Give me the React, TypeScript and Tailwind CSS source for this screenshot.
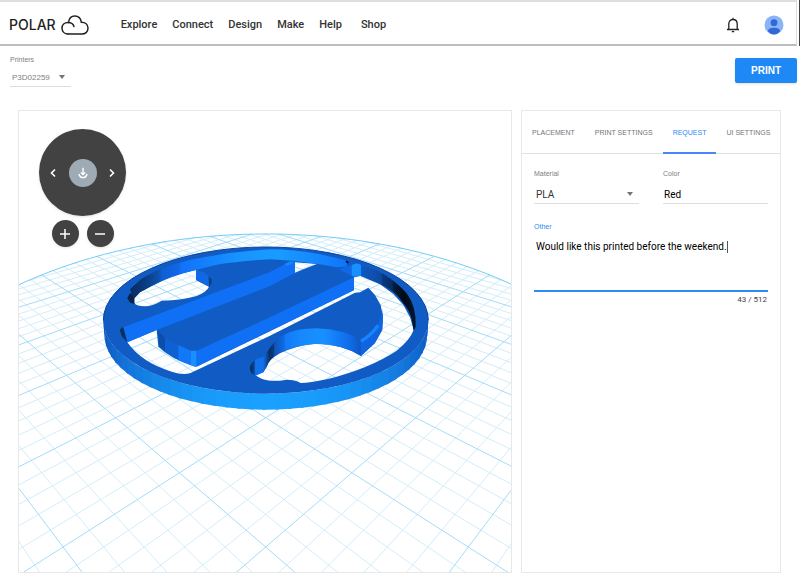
import { ReactNode, useState } from 'react';

const NAV_LINKS = ['Explore', 'Connect', 'Design', 'Make', 'Help', 'Shop'];
const TABS = ['PLACEMENT', 'PRINT SETTINGS', 'REQUEST', 'UI SETTINGS'];
const MAX_LENGTH = 512;

type Point = [number, number];

// Build plate: u/v are plate axes, one unit per major grid line
const PLATE_CENTER = 2;
const PLATE_RADIUS = 4;

const project = (u: number, v: number): Point => {
    const scale = 1 / (0.009872 + 0.00173 * (u + v));
    return [265.7 + (u - v) * scale, 49 + scale / 0.2034];
};

const toPath = (points: Point[]) =>
    points
        .map(([x, y], i) => `${i ? 'L' : 'M'}${x.toFixed(2)} ${y.toFixed(2)}`)
        .join('');

const gridPath = (major: boolean) => {
    let path = '';
    for (let k = -20; k <= 20; k++) {
        if ((k % 5 === 0) !== major) continue;
        const offset = k / 5;
        const half = Math.sqrt(PLATE_RADIUS ** 2 - offset ** 2);
        const line = PLATE_CENTER + offset;
        const from = PLATE_CENTER - half;
        const to = PLATE_CENTER + half;
        path += toPath([project(line, from), project(line, to)]);
        path += toPath([project(from, line), project(to, line)]);
    }
    return path;
};

const plateEdge = toPath(
    Array.from({ length: 181 }, (_, i) => {
        const a = (i * Math.PI) / 90;
        return project(
            PLATE_CENTER + PLATE_RADIUS * Math.cos(a),
            PLATE_CENTER + PLATE_RADIUS * Math.sin(a),
        );
    }),
);

// Outer side of the ring, split in flat facets
const FACETS = 44;
const ringFacets = Array.from({ length: FACETS }, (_, i) => {
    const a = -0.16 + (i * (Math.PI + 0.32)) / FACETS;
    const b = -0.16 + ((i + 1) * (Math.PI + 0.32)) / FACETS + 0.02;
    const top = (t: number) => `${527.5 + 487.5 * Math.cos(t)},${271 + 220 * Math.sin(t)}`;
    const low = (t: number) => `${527.5 + 484 * Math.cos(t)},${316 + 223 * Math.sin(t)}`;
    const light = Math.pow(Math.max(0, Math.sin((a + b) / 2)), 1.3);
    return {
        points: `${top(a)} ${top(b)} ${low(b)} ${low(a)}`,
        fill: `rgb(${Math.round(14 + 12 * light)},${Math.round(84 + 76 * light)},${Math.round(190 + 65 * light)})`,
    };
});

const RING =
    'M40 271A487.5 220 0 0 1 1015 271A487.5 220 0 0 1 40 271Z';
const HOLES = [
    'M133 205L150 187L185 168L225 148L265 133L318 120V150L357 170Q350 186 320 198Q280 210 215 212Q190 228 165 229Q140 229 133 220Z',
    'M112 337L200 300L205 350Q240 385 315 410L322 409L540 304L792 180L792 142L812 137L870 163L910 192L940 225L960 262L971 300Q960 330 920 362Q840 415 710 448Q660 459 632 459Q615 449 590 449Q560 454 540 452Q515 450 497 436L520 427L530 410Q535 390 570 370Q620 345 680 341Q760 343 813 378L852 340L876 300L879 262L872 225L855 195L835 173L810 187L795 188L540 317L300 430Q275 435 245 425Q155 398 112 337Z',
    'M615 97L680 102L640 118L615 128Z',
];

const PlateModel = () => {
    return (
        <svg
            viewBox="19 111 492 461"
            className="block w-full"
            role="img"
            aria-label="Model on build plate"
        >
            <defs>
                <linearGradient id="backWall" gradientUnits="userSpaceOnUse" x1="115" y1="0" x2="775" y2="0">
                    <stop offset="0" stopColor="#082a5c" />
                    <stop offset=".07" stopColor="#0a3a7c" />
                    <stop offset=".14" stopColor="#0d52ad" />
                    <stop offset=".15" stopColor="#0f5fcf" />
                    <stop offset=".23" stopColor="#1068e8" />
                    <stop offset=".24" stopColor="#1272fa" />
                    <stop offset=".38" stopColor="#1583ff" />
                    <stop offset=".5" stopColor="#1894ff" />
                    <stop offset=".68" stopColor="#189cff" />
                    <stop offset=".85" stopColor="#1588ff" />
                    <stop offset="1" stopColor="#1172f8" />
                </linearGradient>
                <linearGradient id="rightWall" gradientUnits="userSpaceOnUse" x1="812" y1="0" x2="976" y2="0">
                    <stop offset="0" stopColor="#0e59c4" />
                    <stop offset=".38" stopColor="#0d4aa0" />
                    <stop offset=".39" stopColor="#0a3a7e" />
                    <stop offset=".58" stopColor="#072c60" />
                    <stop offset=".6" stopColor="#051c3c" />
                    <stop offset=".8" stopColor="#020a16" />
                    <stop offset="1" stopColor="#03152e" />
                </linearGradient>
                <linearGradient id="holeWall" gradientUnits="userSpaceOnUse" x1="525" y1="0" x2="815" y2="0">
                    <stop offset="0" stopColor="#06264f" />
                    <stop offset=".09" stopColor="#0a3a7c" />
                    <stop offset=".1" stopColor="#0e55b8" />
                    <stop offset=".2" stopColor="#106ae8" />
                    <stop offset=".21" stopColor="#127af8" />
                    <stop offset=".38" stopColor="#1789fd" />
                    <stop offset=".6" stopColor="#1890ff" />
                    <stop offset=".75" stopColor="#147bf8" />
                    <stop offset=".88" stopColor="#106be8" />
                    <stop offset="1" stopColor="#0e56bc" />
                </linearGradient>
                <linearGradient id="nookWall" gradientUnits="userSpaceOnUse" x1="480" y1="0" x2="540" y2="0">
                    <stop offset="0" stopColor="#06264f" />
                    <stop offset=".22" stopColor="#0b469a" />
                    <stop offset=".25" stopColor="#1170ee" />
                    <stop offset=".65" stopColor="#1170ee" />
                    <stop offset="1" stopColor="#07305f" />
                </linearGradient>
            </defs>
            <g fill="none" strokeWidth="1">
                <path d={gridPath(false)} stroke="#d3edf9" />
                <path d={gridPath(true)} stroke="#a3dcfa" />
                <path d={plateEdge} stroke="#72ccf8" />
            </g>
            <g transform="translate(90 230) scale(.33333)">
                {ringFacets.map((facet) => (
                    <polygon key={facet.points} points={facet.points} fill={facet.fill} />
                ))}
                <path d={RING + HOLES.join('')} fill="#105cc4" fillRule="evenodd" />
                <path
                    d="M40 271A487.5 220 0 0 1 1015 271"
                    fill="none"
                    stroke="#0b439c"
                    strokeWidth="3"
                />
                {/* ring, inner side */}
                <path
                    fill="url(#backWall)"
                    d="M120 178L150 150Q205 112 300 90Q410 66 540 58Q610 58 690 73L775 92L768 110L740 112L690 103L610 92L540 88Q450 92 380 104L320 119Q240 138 185 168L150 187L133 205L125 192Z"
                />
                <path fill="#06244d" d="M112 205L118 192L124 190L133 205V222L120 218Z" />
                <path d="M768 93L775 99" stroke="#04152c" strokeWidth="5" />
                <path
                    fill="url(#rightWall)"
                    d="M812 105L860 120Q915 150 950 190Q980 230 977 290L971 302L966 270Q958 240 940 220Q915 180 865 160L812 138Z"
                />
                {/* upper cut-out */}
                <path fill="#1068e4" d="M318 119L345 128L357 140V170L318 150Z" />
                <path fill="#0a3f88" d="M356 139L364 148L365 160L357 171Z" />
                {/* long bar */}
                <path fill="#08305f" d="M89 300L97 291L105 298L113 337L96 320Z" />
                <path
                    fill="#1070f5"
                    d="M100 292L540 126L585 103L615 95V129L540 168L200 300L112 337Z"
                />
                <path fill="#1585ff" d="M582 103L600 94L615 95L592 108Z" />
                {/* centre bar */}
                <path fill="#0d4ea8" d="M203 300L225 325V362L209 350Z" />
                <path fill="#0f60d2" d="M225 325L265 345V389Q240 378 225 362Z" />
                <path fill="#1178f8" d="M265 345L303 362V406L265 391Z" />
                <path fill="#1890ff" d="M303 362H320V410L303 406Z" />
                <path fill="#1070f5" d="M320 362L540 262L792 142V181L540 302L320 410Z" />
                <path fill="#1068e8" d="M745 118L785 105V137Z" />
                <path
                    fill="#1890ff"
                    d="M785 106Q798 96 813 105V136Q798 144 785 137Z"
                />
                {/* lower right piece */}
                <path
                    fill="#1064e0"
                    d="M812 330Q850 306 862 285Q875 265 876 235L879 262L877 300L855 340L813 378Z"
                />
                <path
                    d="M813 334Q846 313 864 286"
                    fill="none"
                    stroke="#1684ff"
                    strokeWidth="10"
                />
                <path
                    fill="url(#holeWall)"
                    d="M530 370Q548 335 580 315Q615 296 680 295Q760 298 810 329L813 378Q760 343 680 341Q620 345 570 367Q535 388 530 410Z"
                />
                <path
                    fill="url(#nookWall)"
                    d="M480 415Q482 388 518 382L535 365L540 388L530 410L520 427L497 437L483 428Z"
                />
            </g>
        </svg>
    );
};

const Triangle = ({ className }: { className: string }) => (
    <svg viewBox="0 0 6 4" className={`pointer-events-none absolute h-1 w-1.5 ${className}`}>
        <path d="M0 0h6L3 4z" fill="#757575" />
    </svg>
);

const RoundButton = ({ label, children }: { label: string; children: ReactNode }) => (
    <button
        type="button"
        aria-label={label}
        className="flex size-[27px] items-center justify-center rounded-full bg-[#424242] shadow"
    >
        {children}
    </button>
);

const Header = () => {
    return (
        <header className="border-r border-[#444] bg-white pr-0.5">
            <div className="flex h-[46px] items-center border-t-2 border-r border-b-2 border-t-[#dedede] border-r-[#ddd] border-b-[#bdbdbd] pt-1 pr-3 pl-[9px]">
                <a href="#" className="flex items-center gap-[5px] text-[#222]">
                    <span className="font-[Inter] text-[14px] leading-4 font-medium">POLAR</span>
                    <svg
                        viewBox="0 0 28 20"
                        className="h-5 w-7"
                        fill="none"
                        stroke="#222"
                        strokeWidth="1.5"
                        strokeLinecap="round"
                    >
                        <path d="M7 19C3.500 19 1 16.500 1 13.200C1 10 3.500 7.500 7 7.500C10 7.500 12.300 9 13 11.500" />
                        <path d="M7.500 7.500C8 3.500 10.400 1 13.800 1C17.300 1 19.800 3.500 20.300 7.200C24.200 7.200 27 9.600 27 13.100C27 16.600 24.500 19 21 19H7" />
                    </svg>
                </a>
                <nav className="ml-8 flex gap-[15px] font-[Roboto] text-[11px] font-medium text-[#333]">
                    {NAV_LINKS.map((link) => (
                        <a key={link} href="#" className="last:ml-1">
                            {link}
                        </a>
                    ))}
                </nav>
                <div className="ml-auto flex items-center gap-6">
                    <button type="button" aria-label="Notifications">
                        <svg viewBox="0 0 14 16" className="h-4 w-3.5" fill="none" stroke="#222" strokeWidth="1.3">
                            <path d="M1 12.500H13M2.800 12.500V7C2.800 4.300 4.600 2.500 7 2.500S11.200 4.300 11.200 7V12.500M7 2.500V.8" />
                            <path d="M5.800 14.600H8.200" />
                        </svg>
                    </button>
                    <button type="button" aria-label="Account">
                        <svg viewBox="0 0 20 20" className="size-5">
                            <circle cx="10" cy="10" r="9.500" fill="#8ab4f8" />
                            <circle cx="10" cy="7.700" r="3.400" fill="#3367d6" />
                            <path d="M4 16.500C4 13.800 6.500 12.800 10 12.800S16 13.800 16 16.500Q13.500 19.500 10 19.500T4 16.500Z" fill="#3367d6" />
                        </svg>
                    </button>
                </div>
            </div>
        </header>
    );
};

const ViewControls = () => {
    return (
        <div className="absolute top-[18px] left-5 flex w-[87px] flex-col items-center gap-1">
            <div className="flex size-[87px] items-center justify-between rounded-full bg-[#424242] px-2.5 shadow">
                <button type="button" aria-label="Rotate left">
                    <svg viewBox="0 0 8 10" className="h-2.5 w-2" fill="none" stroke="#fff" strokeWidth="1.6">
                        <path d="M6 1.500L2.500 5L6 8.500" />
                    </svg>
                </button>
                <button
                    type="button"
                    aria-label="Reset view"
                    className="flex size-7 items-center justify-center rounded-full bg-[#9eabb5]"
                >
                    <svg viewBox="0 0 12 12" className="size-3" fill="none" stroke="#fff" strokeWidth="1.4">
                        <path d="M6 .8V7.500M3.800 5.400L6 7.600L8.200 5.400M2 7C2.500 9.500 4 10.600 6 10.600S9.500 9.500 10 7" />
                    </svg>
                </button>
                <button type="button" aria-label="Rotate right">
                    <svg viewBox="0 0 8 10" className="h-2.5 w-2" fill="none" stroke="#fff" strokeWidth="1.6">
                        <path d="M2 1.500L5.500 5L2 8.500" />
                    </svg>
                </button>
            </div>
            <div className="flex gap-2">
                <RoundButton label="Zoom in">
                    <svg viewBox="0 0 12 12" className="size-3" stroke="#fff" strokeWidth="1.5">
                        <path d="M6 1V11M1 6H11" />
                    </svg>
                </RoundButton>
                <RoundButton label="Zoom out">
                    <svg viewBox="0 0 12 12" className="size-3" stroke="#fff" strokeWidth="1.5">
                        <path d="M1 6H11" />
                    </svg>
                </RoundButton>
            </div>
        </div>
    );
};

const RequestForm = () => {
    const [notes, setNotes] = useState('Would like this printed before the weekend.');
    const [touched, setTouched] = useState(false);

    return (
        <form className="px-3 pt-4 text-[7px] text-[#808080]">
            <div className="grid grid-cols-2 gap-6">
                <div className="relative">
                    <label htmlFor="material" className="block leading-2">
                        Material
                    </label>
                    <select
                        id="material"
                        className="mt-2 block h-[18px] w-full appearance-none border-b border-[#ddd] px-0.5 font-[Roboto] text-[10px] text-[#333]"
                    >
                        <option>PLA</option>
                    </select>
                    <Triangle className="right-1.5 bottom-2" />
                </div>
                <div>
                    <label htmlFor="color" className="block leading-2">
                        Color
                    </label>
                    <input
                        id="color"
                        defaultValue="Red"
                        className="mt-2 block h-[18px] w-full border-b border-[#ddd] px-px font-[Roboto] text-[10px] text-black"
                    />
                </div>
            </div>
            <label htmlFor="other" className="mt-[19px] block leading-2 text-[#2b8cf5]">
                Other
            </label>
            <div className="relative mt-2">
                <textarea
                    id="other"
                    rows={3}
                    maxLength={MAX_LENGTH}
                    value={notes}
                    onFocus={() => setTouched(true)}
                    onChange={(e) => setNotes(e.target.value)}
                    className="block h-[53px] w-full resize-none border-b-2 border-[#2b8cf5] px-0.5 py-0.5 font-[Roboto] text-[10px] leading-3 text-black outline-none"
                />
                {!touched && (
                    <span className="pointer-events-none absolute top-0.5 left-[193px] h-3 w-px bg-[#555]" />
                )}
            </div>
            <p className="mt-1 pr-px text-right font-[Roboto] text-[8px] leading-2 text-[#444]">
                {notes.length} / {MAX_LENGTH}
            </p>
        </form>
    );
};

const App = () => {
    const [activeTab, setActiveTab] = useState('REQUEST');

    return (
        <div className="bg-white font-['Liberation_Sans',sans-serif]">
            <Header />
            <div className="flex items-start justify-between pt-2.5 pr-[3px] pl-2.5">
                <div className="relative w-[61px] text-[7px] text-[#808080]">
                    <label htmlFor="printer" className="block leading-2">
                        Printers
                    </label>
                    <select
                        id="printer"
                        className="mt-1.5 block h-[17px] w-full appearance-none border-b border-[#ddd] px-0.5 text-[8px]"
                    >
                        <option>P3D02259</option>
                    </select>
                    <Triangle className="right-1.5 bottom-2" />
                </div>
                <button
                    type="button"
                    className="mt-0.5 h-[25px] rounded-xs bg-[#1e88f5] px-4 text-[10px] font-bold text-white shadow"
                >
                    PRINT
                </button>
            </div>
            <main className="mt-[23px] flex gap-[9px] pr-[19px] pl-[18px]">
                <section className="relative min-w-0 flex-1 border border-[#e8e8e8]">
                    <PlateModel />
                    <ViewControls />
                </section>
                <aside className="w-[260px] shrink-0 border border-[#e8e8e8]">
                    <div role="tablist" className="flex border-b border-[#e0e0e0]">
                        {TABS.map((tab) => (
                            <button
                                key={tab}
                                type="button"
                                role="tab"
                                aria-selected={tab === activeTab}
                                onClick={() => setActiveTab(tab)}
                                className={`-mb-px h-[43px] flex-auto border-b-2 pt-[3px] text-[7px] ${
                                    tab === activeTab
                                        ? 'border-[#4a86f7] text-[#2b8cf5]'
                                        : 'border-transparent text-[#757575]'
                                } px-2.5 whitespace-nowrap`}
                            >
                                {tab}
                            </button>
                        ))}
                    </div>
                    <RequestForm />
                </aside>
            </main>
        </div>
    );
};

export default App;
